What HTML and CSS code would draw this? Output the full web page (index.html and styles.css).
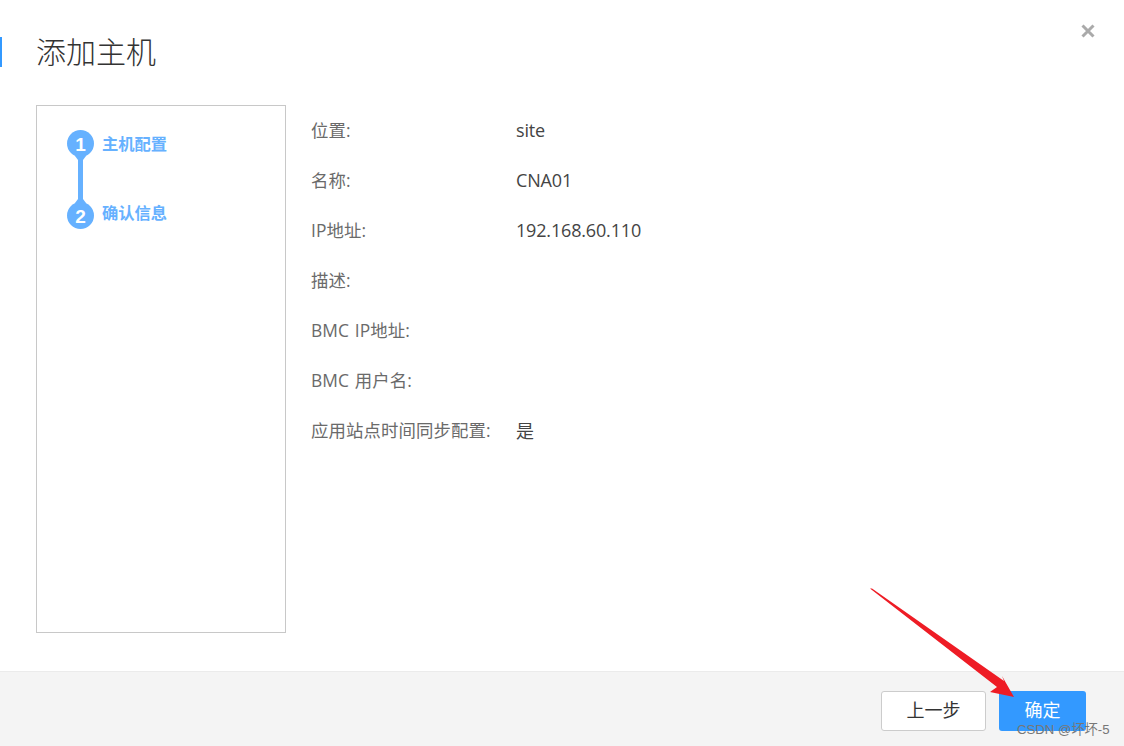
FILE: index.html
```html
<!DOCTYPE html>
<html lang="zh-CN">
<head>
<meta charset="utf-8">
<title>添加主机</title>
<link rel="stylesheet" href="styles.css">
</head>
<body>
<div class="dialog">
  <header class="dialog-header">
    <h1 class="title">添加主机</h1>
    <button class="close" aria-label="关闭">
      <svg width="14" height="14" viewBox="0 0 14 14"><path d="M1.5 1.5 12.5 12.5M12.5 1.5 1.5 12.5" stroke="#aaaaaa" stroke-width="3" fill="none"/></svg>
    </button>
  </header>
  <main class="dialog-body">
    <aside class="steps">
      <div class="step step-first"><span class="dot">1</span><span class="step-label">主机配置</span></div>
      <div class="connector"></div>
      <div class="step step-last"><span class="dot">2</span><span class="step-label">确认信息</span></div>
    </aside>
    <section class="info">
      <div class="row"><span class="key">位置:</span><span class="val">site</span></div>
      <div class="row"><span class="key">名称:</span><span class="val">CNA01</span></div>
      <div class="row"><span class="key">IP地址:</span><span class="val">192.168.60.110</span></div>
      <div class="row"><span class="key">描述:</span><span class="val"></span></div>
      <div class="row"><span class="key">BMC IP地址:</span><span class="val"></span></div>
      <div class="row"><span class="key">BMC 用户名:</span><span class="val"></span></div>
      <div class="row"><span class="key">应用站点时间同步配置:</span><span class="val">是</span></div>
    </section>
  </main>
  <footer class="dialog-footer">
    <button class="btn btn-default">上一步</button>
    <button class="btn btn-primary">确定</button>
  </footer>
  <svg class="arrow" width="1124" height="746" viewBox="0 0 1124 746"><polygon points="870,588.5 872,588.5 1004,681 1002,676 1014,697 990,692 997,687" fill="#ee1c25"/></svg>
  <div class="watermark">CSDN @坏坏-5</div>
</div>
</body>
</html>
```
FILE: styles.css
```css
* { box-sizing: border-box; }
html, body { margin: 0; padding: 0; }
body {
  width: 1124px;
  height: 746px;
  overflow: hidden;
  background: #fff;
  font-family: "Open Sans", "Noto Sans CJK SC", sans-serif;
}
.dialog {
  position: relative;
  display: flex;
  flex-direction: column;
  height: 746px;
}
.dialog-header {
  display: flex;
  justify-content: space-between;
  align-items: flex-start;
  height: 105px;
  padding-top: 37px;
}
.title {
  margin: 0;
  height: 30px;
  padding-left: 34px;
  border-left: 2px solid #3399ff;
  font-size: 30px;
  font-weight: 300;
  line-height: 30px;
  color: #333;
}
.close {
  margin: -13px 29px 0 0;
  padding: 0;
  border: 0;
  background: none;
  display: flex;
}
.dialog-body {
  display: flex;
  flex: 1;
  padding-left: 36px;
}
.steps {
  width: 250px;
  height: 528px;
  border: 1px solid #c8c8c8;
  padding: 24px 0 0 30px;
}
.step {
  display: flex;
  align-items: center;
  gap: 8px;
  height: 27px;
}
.dot {
  width: 27px;
  height: 27px;
  border-radius: 50%;
  background: #66b1ff;
  color: #fff;
  font-family: "Liberation Sans", sans-serif;
  font-size: 19px;
  font-weight: 700;
  line-height: 29px;
  text-align: center;
}
.step-label {
  font-size: 16.3px;
  font-weight: 700;
  color: #66b1ff;
}
.step-first .step-label { margin-bottom: 2px; }
.step-last .step-label { margin-bottom: 8px; }
.connector {
  position: relative;
  width: 5px;
  height: 45px;
  margin-left: 11px;
  background: #66b1ff;
}
.connector::before,
.connector::after {
  content: "";
  position: absolute;
  left: -3px;
  width: 11px;
  height: 4px;
  background: #66b1ff;
}
.connector::before {
  top: -1px;
  clip-path: polygon(0 0, 100% 0, 73% 100%, 27% 100%);
}
.connector::after {
  bottom: -1px;
  clip-path: polygon(27% 0, 73% 0, 100% 100%, 0 100%);
}
.info {
  padding: 0 0 0 25px;
}
.row {
  display: flex;
  align-items: center;
  height: 50px;
  padding-bottom: 1px;
  font-size: 18px;
}
.key {
  width: 205px;
  color: #6a6a6a;
  font-size: 17.4px;
  font-weight: 400;
  letter-spacing: 0.1px;
  word-spacing: 1px;
}
.val {
  color: #444;
  letter-spacing: -0.17px;
}
.dialog-footer {
  display: flex;
  justify-content: flex-end;
  gap: 13px;
  height: 75px;
  padding: 19px 38px 0 0;
  background: #f4f4f4;
  border-top: 1px solid #ebebeb;
}
.btn {
  height: 40px;
  border-radius: 3px;
  font-family: inherit;
  font-size: 18px;
  padding: 0 0 4px;
}
.btn-default {
  width: 105px;
  background: #fff;
  border: 1px solid #ccc;
  color: #333;
}
.btn-primary {
  width: 87px;
  background: #3399ff;
  border: 0;
  color: #fff;
}
.arrow {
  position: absolute;
  left: 0;
  top: 0;
  pointer-events: none;
}
.watermark {
  position: absolute;
  left: 1017px;
  top: 721px;
  font-family: "Liberation Sans", "Noto Sans CJK SC", sans-serif;
  font-size: 13.2px;
  line-height: 18px;
  color: #777;
  white-space: nowrap;
}
```
